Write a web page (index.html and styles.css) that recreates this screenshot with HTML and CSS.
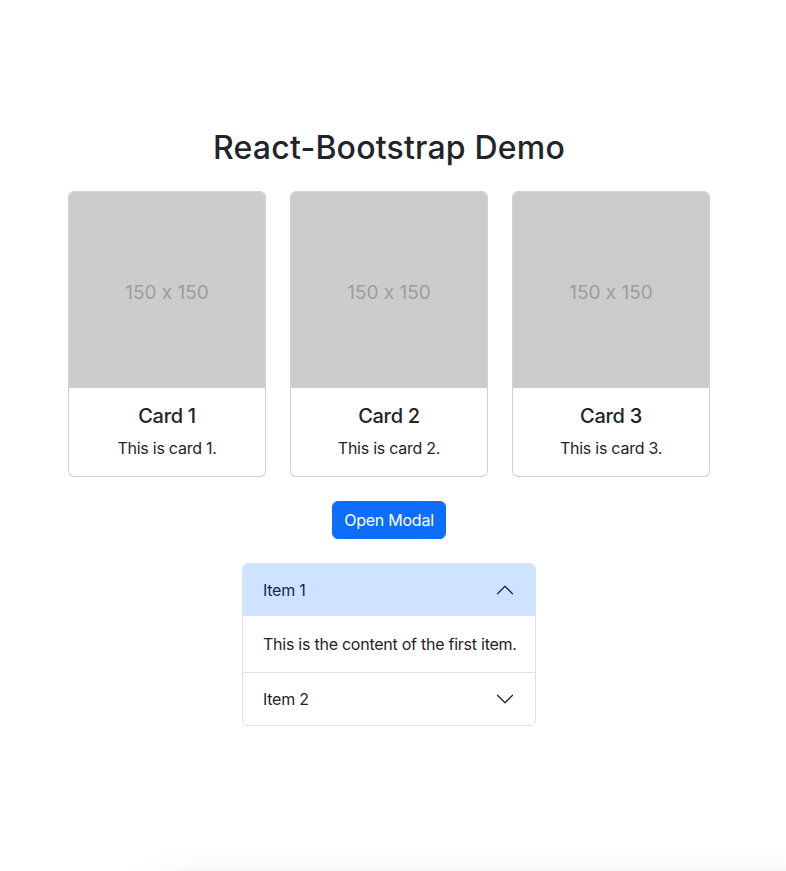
FILE: index.html
```html
<!DOCTYPE html>
<html lang="en">

<head>
    <meta charset="UTF-8">
    <meta name="viewport" content="width=device-width, initial-scale=1.0">
    <title>React-Bootstrap Demo</title>
    <link rel="stylesheet" href="styles.css">
</head>

<body>
    <div class="page">
        <h2 class="title">React-Bootstrap Demo</h2>

        <div class="card-row">
            <div class="card">
                <div class="card-img">150 x 150</div>
                <div class="card-body">
                    <h5 class="card-title">Card 1</h5>
                    <p class="card-text">This is card 1.</p>
                </div>
            </div>
            <div class="card">
                <div class="card-img">150 x 150</div>
                <div class="card-body">
                    <h5 class="card-title">Card 2</h5>
                    <p class="card-text">This is card 2.</p>
                </div>
            </div>
            <div class="card">
                <div class="card-img">150 x 150</div>
                <div class="card-body">
                    <h5 class="card-title">Card 3</h5>
                    <p class="card-text">This is card 3.</p>
                </div>
            </div>
        </div>

        <button class="btn-primary" type="button">Open Modal</button>

        <div class="accordion">
            <div class="accordion-item">
                <button class="accordion-button open" type="button">
                    <span>Item 1</span>
                    <svg class="chevron" viewBox="0 0 16 16" width="20" height="20">
                        <path fill="none" stroke="#052c65" stroke-linecap="round" stroke-linejoin="round" d="M2 11L8 5L14 11" />
                    </svg>
                </button>
                <div class="accordion-body">This is the content of the first item.</div>
            </div>
            <div class="accordion-item">
                <button class="accordion-button" type="button">
                    <span>Item 2</span>
                    <svg class="chevron" viewBox="0 0 16 16" width="20" height="20">
                        <path fill="none" stroke="#212529" stroke-linecap="round" stroke-linejoin="round" d="M2 5L8 11L14 5" />
                    </svg>
                </button>
            </div>
        </div>
    </div>

    <div class="edge-shadow"></div>
</body>

</html>
```

FILE: styles.css
```css
body,
html {
    margin: 0;
    padding: 0;
    font-family: Inter, "Noto Sans", Arial, sans-serif;
    color: #212529;
    background: #fff;
    overflow: hidden;
    letter-spacing: -0.25px;
}

.page {
    width: 778px;
    padding-top: 129px;
    display: flex;
    flex-direction: column;
    align-items: center;
}

.title {
    margin: 0 0 24px;
    font-size: 32px;
    font-weight: 500;
    line-height: 38px;
    letter-spacing: 0.2px;
}

.card-row {
    display: flex;
    gap: 24px;
}

.card {
    width: 196px;
    border: 1px solid rgba(0, 0, 0, 0.175);
    border-radius: 6px;
    overflow: hidden;
    background: #fff;
}

.card-img {
    height: 196px;
    padding-top: 4px;
    box-sizing: border-box;
    background: #ccc;
    color: #9d9d9d;
    font-size: 19px;
    font-feature-settings: "calt" 0;
    letter-spacing: 0;
    display: flex;
    align-items: center;
    justify-content: center;
}

.card-body {
    padding: 16px;
    text-align: center;
}

.card-title {
    margin: 0 0 8px;
    font-size: 20px;
    font-weight: 450;
    line-height: 24px;
    letter-spacing: -0.3px;
}

.card-text {
    margin: 0;
    font-size: 16px;
    line-height: 24px;
}

.btn-primary {
    margin-top: 24px;
    padding: 6px 11px;
    font-family: inherit;
    font-size: 16px;
    line-height: 24px;
    letter-spacing: -0.25px;
    color: #fff;
    background: #0d6efd;
    border: 1px solid #0d6efd;
    border-radius: 6px;
}

.accordion {
    margin-top: 24px;
    width: 294px;
    box-sizing: border-box;
    border: 1px solid #dee2e6;
    border-radius: 6px;
    overflow: hidden;
}

.accordion-item + .accordion-item {
    border-top: 1px solid #dee2e6;
}

.accordion-button {
    width: 100%;
    display: flex;
    align-items: center;
    justify-content: space-between;
    padding: 16px 20px;
    font-family: inherit;
    font-size: 16px;
    line-height: 20px;
    letter-spacing: -0.25px;
    color: #212529;
    background: #fff;
    border: 0;
    text-align: left;
}

.accordion-button.open {
    color: #052c65;
    background: #cfe2ff;
}

.chevron {
    display: block;
}

.accordion-body {
    padding: 16px 20px;
    font-size: 16px;
    line-height: 24px;
    white-space: nowrap;
}

.edge-shadow {
    position: fixed;
    left: 150px;
    right: -40px;
    top: 884px;
    height: 200px;
    border-radius: 24px;
    box-shadow: 0 0 40px rgba(0, 0, 0, 0.12);
}
```
